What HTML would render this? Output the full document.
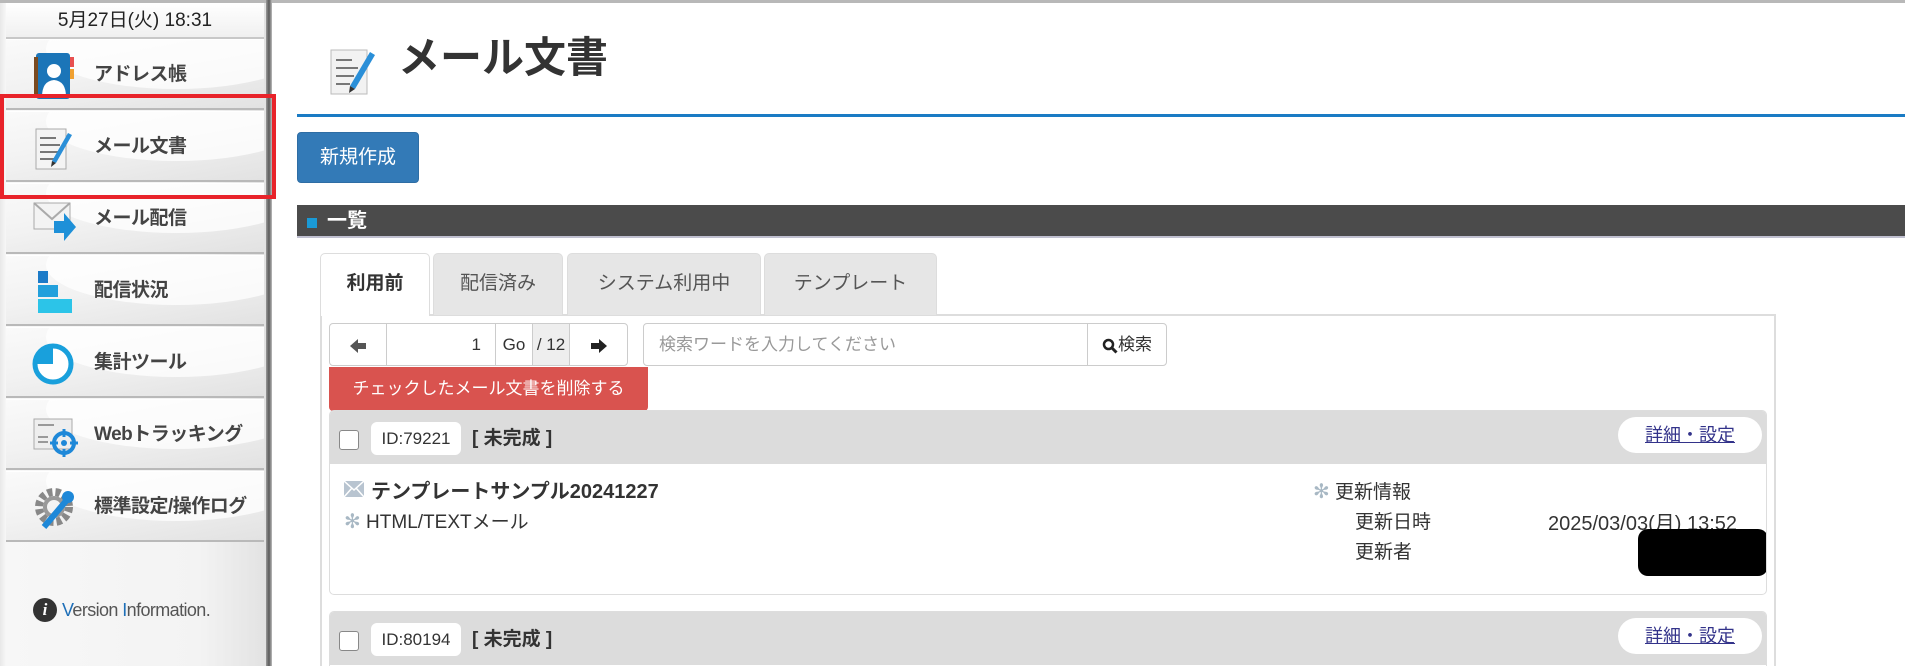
<!DOCTYPE html>
<html style="width:1905px;height:666px;overflow:hidden"><head><meta charset="utf-8">
<style>
*{margin:0;padding:0;box-sizing:border-box}
body{width:1905px;height:666px;overflow:hidden;background:#fff;font-family:"Liberation Sans","Noto Sans CJK JP",sans-serif;color:#333;position:relative}
.a{position:absolute}
#topline{left:0;top:0;width:1905px;height:3px;background:#b8b8b8}
#side{left:0;top:3px;width:268px;height:663px;background:linear-gradient(to right,#e8e8e8 0,#f7f7f7 6px,#f3f3f3 200px,#e2e2e2 268px)}
#sideb{left:266px;top:0;width:6px;height:666px;background:linear-gradient(to right,#9a9a9a,#5a5a5a,#bdbdbd)}
#date{left:6px;top:3px;width:258px;height:36px;background:linear-gradient(#fff,#f0f0f0);border-bottom:2px solid #c8c8c8;text-align:center;font-size:19px;line-height:36px;color:#222}
.it{left:6px;width:258px;height:71px;background:linear-gradient(170deg,#fafafa 0%,#f2f2f2 45%,#e2e2e2 100%);border-bottom:2px solid #b9b9b9;box-shadow:inset 0 1px 0 #fff;overflow:hidden}
.it:before{content:"";position:absolute;left:40px;top:-30px;width:260px;height:80px;border-radius:50%;background:rgba(255,255,255,.75)}
.it span{position:absolute;left:88px;top:0;line-height:71px;font-size:19px;font-weight:bold;color:#444;letter-spacing:-.5px}
.it svg{position:absolute;left:26px;top:12px}
#red{left:0;top:94px;width:276px;height:105px;border:4px solid #e8232a}
#title{left:398px;top:24px;font-size:42px;font-weight:bold;color:#333;letter-spacing:0}
#bline{left:297px;top:114px;width:1608px;height:3px;background:#1a7bc4}
#new{left:297px;top:132px;width:122px;height:51px;background:#337ab7;border:1px solid #2e6da4;border-radius:4px;color:#fff;font-size:19px;text-align:center;line-height:49px}
#bar{left:297px;top:205px;width:1608px;height:33px;background:#4b4b4b;border-bottom:2px solid #c0c0d0;color:#fff;font-size:20px;font-weight:bold;line-height:32px;padding-left:30px}
#bar i{position:absolute;left:10px;top:13px;width:10px;height:10px;background:#1a9ad6}
.tab{top:253px;height:62px;background:#e6e6e6;border:1px solid #ddd;border-bottom:none;border-radius:5px 5px 0 0;font-size:19px;color:#555;text-align:center;line-height:60px}
#panel{left:320px;top:314px;width:1456px;height:352px;border:2px solid #ddd;border-bottom:none}
.pg{top:323px;height:43px;border:1px solid #ccc;background:#fff;font-size:17px;line-height:41px;text-align:center;color:#333}
.pg svg{vertical-align:middle}
#del{left:329px;top:367px;width:319px;height:44px;background:#d9534f;border-radius:0 0 4px 4px;color:#fff;font-size:17px;line-height:44px;text-align:center}
.card{left:329px;width:1438px;border:1px solid #ddd;border-radius:5px;background:#fff;overflow:hidden}
.ch{height:53px;background:#dcdcdc;position:relative}
.cb{position:absolute;left:9px;top:19px;width:20px;height:20px;border:1px solid #888;border-radius:3px;background:#fff}
.id{position:absolute;left:41px;top:11px;width:90px;height:33px;background:#fff;border-radius:6px;font-size:17px;line-height:33px;text-align:center}
.st{position:absolute;left:142px;top:11px;font-size:19px;font-weight:bold;line-height:33px}
.pill{position:absolute;left:1288px;top:6px;width:144px;height:36px;background:#fff;border-radius:18px;font-size:18px;line-height:36px;text-align:center;color:#33338a;text-decoration:underline}
.t{position:absolute;font-size:19px;color:#333;white-space:nowrap}
.ast{color:#a8b8c4;font-size:20px}
</style></head><body>
<div class="a" id="topline"></div>
<div class="a" id="side"></div>
<div class="a" id="date">5月27日(火) 18:31</div>
<div class="a it" style="top:39px"><svg width="44" height="50" viewBox="0 0 44 50"><rect x="4" y="2" width="34" height="46" rx="3" fill="#1b75b8"/><rect x="38" y="6" width="4" height="10" fill="#e85050"/><rect x="38" y="18" width="4" height="10" fill="#f0a030"/><rect x="2" y="6" width="4" height="38" fill="#7a4a20"/><circle cx="22" cy="20" r="7" fill="#fff"/><path d="M10 46 Q10 30 22 29 Q34 30 34 46Z" fill="#fff"/></svg><span>アドレス帳</span></div>
<div class="a it" style="top:111px"><svg width="44" height="50" viewBox="0 0 44 50"><rect x="4" y="6" width="30" height="40" fill="#f4f4f4" stroke="#aaa"/><path d="M8 15h16M8 22h20M8 29h18M8 36h14" stroke="#777" stroke-width="2"/><path d="M20 38 L36 10 L40 12 L24 40Z" fill="#2a8fd8"/><path d="M20 38l4 2-5 4z" fill="#333"/></svg><span>メール文書</span></div>
<div class="a it" style="top:183px"><svg width="48" height="50" viewBox="0 0 48 50"><rect x="2" y="8" width="36" height="26" fill="#f3f3f3" stroke="#aaa"/><path d="M2 8 L20 24 L38 8" fill="none" stroke="#aaa" stroke-width="2"/><path d="M22 26h10v-8l12 14-12 14v-8h-10z" fill="#1e90d8"/></svg><span>メール配信</span></div>
<div class="a it" style="top:255px"><svg width="44" height="50" viewBox="0 0 44 50"><rect x="6" y="4" width="10" height="12" fill="#1c7bc8"/><rect x="6" y="18" width="20" height="12" fill="#22a0dc"/><rect x="6" y="32" width="34" height="14" fill="#2cc4e8"/></svg><span>配信状況</span></div>
<div class="a it" style="top:327px"><svg width="44" height="50" viewBox="0 0 44 50"><circle cx="21" cy="25" r="18" fill="#fff" stroke="#19a0dc" stroke-width="5"/><path d="M21 25V9A16 16 0 0 0 5 25Z" fill="#19a0dc"/></svg><span>集計ツール</span></div>
<div class="a it" style="top:399px"><svg width="50" height="50" viewBox="0 0 50 50"><rect x="2" y="8" width="38" height="30" fill="#eee" stroke="#aaa"/><path d="M6 14h16M6 26h10M6 31h10" stroke="#999" stroke-width="2"/><circle cx="32" cy="32" r="10" fill="none" stroke="#1e88d8" stroke-width="4"/><circle cx="32" cy="32" r="3" fill="#1e88d8"/><path d="M32 18v8M32 38v8M18 32h8M38 32h8" stroke="#1e88d8" stroke-width="3"/></svg><span>Webトラッキング</span></div>
<div class="a it" style="top:471px"><svg width="50" height="50" viewBox="0 0 50 50"><circle cx="22" cy="24" r="15" fill="none" stroke="#888" stroke-width="8" stroke-dasharray="5 3"/><circle cx="22" cy="24" r="9" fill="none" stroke="#999" stroke-width="4"/><path d="M12 44 L34 18" stroke="#1e88d8" stroke-width="6"/><circle cx="36" cy="14" r="6" fill="#1e88d8"/></svg><span>標準設定/操作ログ</span></div>
<div class="a" style="left:33px;top:598px;width:24px;height:24px;border-radius:50%;background:#333;color:#fff;font:italic bold 17px 'Liberation Serif',serif;text-align:center;line-height:24px">i</div>
<div class="a" style="left:62px;top:600px;font-size:18px;color:#555;letter-spacing:-.6px"><span style="color:#1e6fb8">V</span>ersion <span style="color:#1e6fb8">I</span>nformation.</div>
<div class="a" id="sideb"></div>
<div class="a" id="red"></div>

<svg class="a" style="left:328px;top:42px" width="50" height="55" viewBox="0 0 50 55"><rect x="3" y="8" width="36" height="44" fill="#f2f2f2" stroke="#bbb"/><path d="M8 18h16M8 26h22M8 34h18M8 42h14" stroke="#777" stroke-width="2"/><path d="M22 44 L42 10 L47 13 L27 47Z" fill="#2a8fd8"/><path d="M22 44l5 3-6 4z" fill="#333"/></svg>
<div class="a" id="title">メール文書</div>
<div class="a" id="bline"></div>
<div class="a" id="new">新規作成</div>
<div class="a" id="bar"><i></i>一覧</div>

<div class="a" id="panel"></div>
<div class="a tab" style="left:320px;width:110px;background:#fff;color:#333;font-weight:bold;height:63px">利用前</div>
<div class="a tab" style="left:433px;width:130px">配信済み</div>
<div class="a tab" style="left:567px;width:194px">システム利用中</div>
<div class="a tab" style="left:764px;width:173px">テンプレート</div>

<div class="a pg" style="left:329px;width:58px;border-radius:4px 0 0 4px"><svg width="18" height="16" viewBox="0 0 18 16"><path d="M1 8 L9 1 V5 H17 V11 H9 V15Z" fill="#555"/></svg></div>
<div class="a pg" style="left:386px;width:110px;text-align:right;padding-right:14px">1</div>
<div class="a pg" style="left:495px;width:38px">Go</div>
<div class="a pg" style="left:532px;width:38px;background:#eee">/ 12</div>
<div class="a pg" style="left:569px;width:59px;border-radius:0 4px 4px 0"><svg width="18" height="16" viewBox="0 0 18 16"><path d="M17 8 L9 1 V5 H1 V11 H9 V15Z" fill="#222"/></svg></div>
<div class="a pg" style="left:643px;width:445px;text-align:left;padding-left:15px;color:#999;border-radius:4px 0 0 4px">検索ワードを入力してください</div>
<div class="a pg" style="left:1087px;width:80px;border-radius:0 4px 4px 0"><svg width="16" height="16" viewBox="0 0 16 16"><circle cx="6.5" cy="6.5" r="4.5" fill="none" stroke="#222" stroke-width="2.5"/><path d="M10 10l4.5 4.5" stroke="#222" stroke-width="3"/></svg>検索</div>
<div class="a" id="del">チェックしたメール文書を削除する</div>

<div class="a card" style="top:410px;height:185px">
 <div class="ch"><div class="cb"></div><div class="id">ID:79221</div><div class="st">[ 未完成 ]</div><div class="pill">詳細・設定</div></div>
 <svg class="a" style="left:14px;top:70px" width="20" height="16" viewBox="0 0 20 16"><rect x="0" y="0" width="20" height="16" fill="#b8c4d0"/><path d="M0 0 L10 9 L20 0 M0 16 L8 7 M20 16 L12 7" stroke="#fff" stroke-width="1.5" fill="none"/></svg>
 <div class="t" style="left:41px;top:64px;font-weight:bold;font-size:20px">テンプレートサンプル20241227</div>
 <div class="t" style="left:14px;top:96px"><span class="ast">✻</span> HTML/TEXTメール</div>
 <div class="t" style="left:983px;top:66px"><span class="ast">✻</span> 更新情報</div>
 <div class="t" style="left:1025px;top:96px">更新日時</div>
 <div class="t" style="left:1218px;top:96px;font-size:20px">2025/03/03(月) 13:52</div>
 <div class="t" style="left:1025px;top:126px">更新者</div>
 <div class="a" style="left:1308px;top:118px;width:130px;height:47px;background:#000;border-radius:10px"></div>
</div>
<div class="a card" style="top:611px;height:70px">
 <div class="ch"><div class="cb"></div><div class="id">ID:80194</div><div class="st">[ 未完成 ]</div><div class="pill">詳細・設定</div></div>
</div>
</body></html>
